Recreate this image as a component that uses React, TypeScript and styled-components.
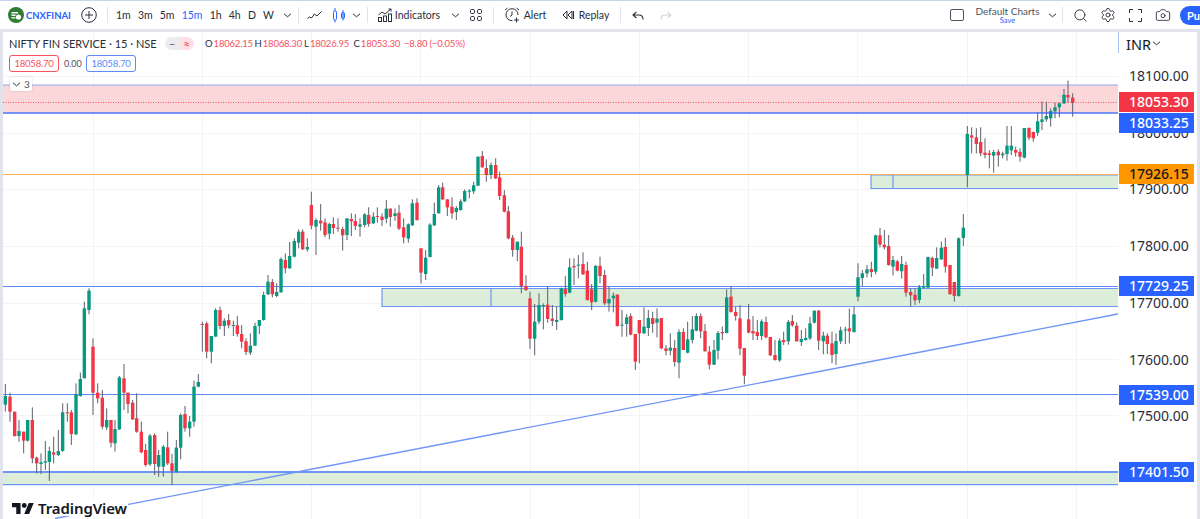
import React from 'react';
import styled, { createGlobalStyle } from 'styled-components';
import { Search, Settings, Camera } from 'lucide-react';

const COLORS = {
  text: '#2a2e39',
  blue: '#2962ff',
  softBlue: '#7ea0f8',
  red: '#f23645',
  legendRed: '#f7525f',
  green: '#089981',
  orange: '#ff9800',
  frame: '#e0e3eb',
};

const FONT = `'Lato', 'Liberation Sans', sans-serif`;
const PRICE_FONT = `'Noto Sans', 'Liberation Sans', sans-serif`;

const GlobalStyle = createGlobalStyle`
  html, body {
    margin: 0;
    padding: 0;
    background: ${COLORS.frame};
    font-family: ${FONT};
    overflow: hidden;
  }
`;

const Page = styled.div`
  width: 1200px;
  height: 519px;
  display: flex;
  flex-direction: column;
  overflow: hidden;
  background: ${COLORS.frame};
`;

const TopBar = styled.header`
  height: 28px;
  flex: none;
  display: flex;
  align-items: center;
  padding-left: 8px;
  background: #fff;
  border-top: 1px solid #c6d4ee;
  color: ${COLORS.text};
  font-size: 10.5px;
`;

const Item = styled.div<{ $ml?: number; $w?: number }>`
  flex: none;
  display: flex;
  align-items: center;
  justify-content: center;
  margin-left: ${(p) => p.$ml ?? 0}px;
  width: ${(p) => (p.$w ? `${p.$w}px` : 'auto')};
  white-space: nowrap;
`;

const Ticker = styled(Item)`
  color: #2962ff;
  font-weight: 700;
  font-size: 9.5px;
  justify-content: flex-start;
`;

const Divider = styled.div<{ $ml: number }>`
  flex: none;
  width: 1px;
  height: 16px;
  margin-left: ${(p) => p.$ml}px;
  background: ${COLORS.frame};
`;

const IntervalRow = styled.div`
  flex: none;
  width: 158px;
  margin-left: 8px;
  display: flex;
  justify-content: space-between;
`;

const Interval = styled.span<{ $active?: boolean }>`
  color: ${(p) => (p.$active ? COLORS.blue : COLORS.text)};
`;

const RightTools = styled.div`
  margin-left: auto;
  display: flex;
  align-items: center;
`;

const LayoutName = styled.div`
  flex: none;
  width: 65px;
  margin-left: 11px;
  display: flex;
  flex-direction: column;
  align-items: center;
  line-height: 11px;
  font-size: 10px;
  color: #50535e;
  white-space: nowrap;
`;

const SaveHint = styled.span`
  color: ${COLORS.blue};
  font-size: 7.5px;
  line-height: 8px;
`;

const Publish = styled.div`
  flex: none;
  width: 20px;
  height: 19px;
  margin-left: 9px;
  padding-left: 7px;
  box-sizing: border-box;
  overflow: hidden;
  color: #fff;
  background: ${COLORS.blue};
  border-radius: 10px 0 0 10px;
  font-size: 11px;
  font-weight: 700;
  line-height: 19px;
`;

const ChartRow = styled.main`
  flex: 1;
  margin: 3px 3px 0 3px;
  display: flex;
  min-height: 0;
  background: #fff;
`;

const Plot = styled.section`
  position: relative;
  width: 1115px;
  flex: none;
  overflow: hidden;
`;

const PlotCanvas = styled.svg`
  display: block;
`;

const Legend = styled.div`
  position: absolute;
  left: 6px;
  top: 4px;
  display: flex;
  flex-direction: column;
  color: ${COLORS.text};
`;

const LegendRow = styled.div`
  display: flex;
  align-items: center;
  height: 15px;
`;

const Title = styled.span`
  width: 156px;
  font-size: 11px;
  white-space: nowrap;
`;

const Pill = styled.div`
  width: 29px;
  height: 13px;
  display: flex;
  border-radius: 7px;
  overflow: hidden;
  margin-right: 11px;
`;

const PillPart = styled.span<{ $tint: string; $ink: string }>`
  flex: 1;
  display: flex;
  align-items: center;
  justify-content: center;
  background: ${(p) => p.$tint};
  color: ${(p) => p.$ink};
  font-size: 11px;
  font-weight: 700;
  line-height: 1;
`;

const Ohlc = styled.span<{ $w?: number }>`
  width: ${(p) => (p.$w ? `${p.$w}px` : 'auto')};
  font-size: 9.5px;
  white-space: nowrap;
`;

const Value = styled.span`
  color: ${COLORS.legendRed};
  margin-left: 1px;
  letter-spacing: -0.2px;
`;

const QuoteRow = styled.div`
  display: flex;
  align-items: center;
  margin-top: 4px;
`;

const QuoteBox = styled.span<{ $tone: string }>`
  width: 50px;
  height: 17px;
  box-sizing: border-box;
  border: 1px solid ${(p) => p.$tone};
  border-radius: 3px;
  color: ${(p) => p.$tone};
  font-size: 9.5px;
  line-height: 15px;
  text-align: center;
  letter-spacing: -0.2px;
`;

const Spread = styled.span`
  width: 27px;
  padding-left: 5px;
  box-sizing: border-box;
  font-size: 9px;
  color: #50535e;
`;

const Collapse = styled.div`
  position: absolute;
  left: 7px;
  top: 45px;
  width: 22px;
  height: 14px;
  display: flex;
  align-items: center;
  justify-content: center;
  gap: 3px;
  background: #fff;
  border-radius: 2px;
  box-shadow: 0 0 2px rgba(42, 46, 57, 0.25);
  font-size: 10px;
  color: #50535e;
`;

const Watermark = styled.div`
  position: absolute;
  left: 6px;
  top: 468px;
  display: flex;
  align-items: center;
  gap: 4px;
  height: 16px;
  padding: 0 1px 0 3px;
  background: #fff;
  color: #131722;
  font-family: ${PRICE_FONT};
  font-size: 15px;
  font-weight: 600;
  line-height: 16px;
  letter-spacing: -0.1px;
`;

const PriceAxis = styled.aside`
  position: relative;
  flex: 1;
  overflow: hidden;
  background: #fff;
  font-family: ${PRICE_FONT};
`;

const AxisAccent = styled.div`
  position: absolute;
  left: 0;
  top: 0;
  width: 1px;
  height: 21px;
  background: #a8c0f4;
`;

const Currency = styled.div`
  position: absolute;
  left: 8px;
  top: 1px;
  display: flex;
  align-items: center;
  gap: 1px;
  height: 21px;
  font-size: 14.5px;
  color: #131722;
`;

const Tick = styled.div<{ $y: number }>`
  position: absolute;
  left: 11px;
  top: ${(p) => p.$y - 42}px;
  height: 20px;
  line-height: 20px;
  font-size: 14px;
  color: #2a2e39;
`;

const PriceTag = styled.div<{ $y: number; $bg: string; $ink: string }>`
  position: absolute;
  left: 1px;
  top: ${(p) => p.$y - 32}px;
  width: 75px;
  height: 20px;
  padding-left: 10px;
  box-sizing: border-box;
  background: ${(p) => p.$bg};
  color: ${(p) => p.$ink};
  font-size: 14px;
  font-weight: 500;
  line-height: 20px;
`;

// [x, up, wickTop, bodyTop, bodyBottom, wickBottom] read off 3x crops, each block has its own origin
type Row = [number, number, number, number, number, number];

const BLOCKS: { ox: number; oy: number; rows: Row[] }[] = [
  {
    ox: 0,
    oy: 370,
    rows: [
      [16, 1, 42, 78, 104, 125], [30, 0, 68, 80, 125, 155], [44, 0, 125, 125, 198, 200], [57, 1, 150, 183, 198, 215],
      [71, 0, 185, 185, 212, 250], [83, 1, 150, 150, 212, 215], [97, 0, 112, 150, 265, 280], [110, 0, 260, 263, 280, 310],
      [123, 1, 250, 277, 282, 312], [136, 1, 213, 274, 278, 300], [148, 1, 230, 243, 276, 333], [161, 0, 200, 247, 254, 280],
      [175, 1, 180, 243, 255, 258], [188, 1, 100, 127, 243, 245], [202, 0, 100, 127, 130, 155], [214, 0, 120, 127, 192, 225],
      [228, 1, 40, 72, 193, 195], [241, 1, 8, 27, 78, 80], [293, 0, 40, 68, 85, 100], [307, 0, 60, 83, 170, 178],
      [320, 1, 115, 150, 172, 180], [333, 0, 150, 150, 218, 232], [345, 1, 150, 177, 220, 245], [358, 1, 18, 22, 178, 180],
      [372, 0, -18, 25, 68, 120], [384, 0, 68, 68, 102, 130], [398, 0, 90, 98, 148, 150], [410, 0, 70, 145, 185, 188],
      [424, 0, 155, 185, 247, 250], [437, 0, 222, 240, 285, 290], [450, 1, 192, 197, 283, 288], [464, 0, 190, 195, 282, 315],
      [476, 1, 240, 255, 290, 320], [490, 1, 225, 230, 290, 320], [503, 0, 185, 232, 280, 285], [516, 0, 252, 280, 303, 345],
      [529, 1, 210, 233, 306, 308], [542, 1, 130, 135, 233, 268], [555, 0, 108, 132, 175, 185], [569, 1, 138, 155, 175, 200],
      [582, 1, 32, 50, 155, 170], [595, 1, 12, 36, 50, 52],
    ],
  },
  {
    ox: 0,
    oy: 180,
    rows: [
      [253, 1, 365, 385, 595, 595], [267, 1, 325, 332, 390, 403], [279, 0, 475, 500, 638, 705],
      [607, 0, 425, 432, 434, 515], [620, 0, 425, 430, 515, 535], [634, 1, 468, 468, 515, 550], [647, 1, 385, 390, 470, 470],
      [660, 0, 380, 390, 438, 448], [673, 1, 415, 422, 438, 468], [686, 0, 402, 420, 436, 445], [700, 1, 422, 435, 437, 468],
      [712, 0, 408, 436, 462, 470], [725, 0, 435, 462, 485, 505], [738, 0, 475, 484, 516, 525], [751, 1, 460, 497, 518, 525],
      [765, 1, 428, 438, 497, 498], [778, 1, 420, 420, 438, 462], [791, 1, 335, 345, 420, 422], [804, 1, 285, 305, 343, 345],
      [817, 0, 297, 306, 343, 352], [830, 1, 310, 336, 348, 352], [843, 1, 232, 237, 337, 338], [856, 0, 220, 240, 265, 280],
      [869, 1, 186, 228, 265, 266], [883, 1, 175, 183, 230, 232], [896, 1, 148, 155, 188, 205],
    ],
  },
  {
    ox: 300,
    oy: 120,
    rows: [
      [8, 0, 328, 335, 388, 390], [22, 1, 355, 381, 388, 395], [34, 0, 215, 255, 317, 328], [48, 1, 295, 300, 320, 405],
      [62, 0, 252, 302, 310, 332], [75, 0, 295, 307, 345, 352], [88, 1, 308, 312, 341, 358], [100, 0, 292, 312, 324, 342],
      [114, 0, 295, 323, 325, 335], [128, 0, 320, 327, 346, 392], [141, 1, 295, 295, 345, 360], [154, 0, 280, 297, 304, 348],
      [166, 0, 282, 303, 318, 330], [180, 1, 295, 313, 320, 350], [194, 1, 280, 283, 315, 322], [206, 0, 262, 285, 312, 320],
      [220, 1, 277, 290, 310, 312], [232, 0, 262, 288, 290, 308], [246, 0, 280, 290, 300, 318], [259, 1, 240, 266, 296, 310],
      [271, 0, 265, 266, 291, 320], [285, 1, 265, 280, 288, 303], [297, 0, 255, 278, 326, 330], [311, 0, 295, 322, 352, 370],
      [325, 1, 310, 313, 356, 368], [337, 1, 238, 250, 316, 318], [351, 0, 235, 248, 300, 302], [363, 0, 385, 385, 458, 490],
      [377, 1, 390, 413, 462, 480], [390, 1, 310, 314, 411, 412], [403, 1, 248, 282, 316, 318], [416, 1, 195, 202, 280, 280],
      [428, 0, 188, 202, 238, 240], [442, 0, 238, 238, 262, 288], [456, 0, 232, 260, 280, 296], [469, 1, 258, 264, 276, 300],
      [482, 1, 238, 244, 270, 272], [494, 1, 208, 213, 244, 246], [508, 1, 208, 212, 214, 235], [521, 1, 185, 196, 214, 222],
      [534, 1, 110, 110, 197, 198], [547, 0, 93, 108, 142, 143], [559, 0, 118, 144, 165, 185], [573, 1, 127, 135, 165, 178],
      [587, 0, 115, 135, 175, 177], [599, 0, 155, 172, 228, 240], [613, 0, 210, 226, 275, 277], [625, 0, 258, 274, 355, 358],
      [638, 0, 345, 353, 390, 410], [652, 1, 365, 365, 390, 424], [664, 0, 335, 380, 498, 520], [678, 0, 466, 498, 510, 513],
      [690, 0, 515, 535, 656, 687], [704, 1, 552, 605, 656, 706], [717, 1, 520, 555, 605, 612], [730, 1, 550, 555, 557, 628],
      [743, 0, 500, 554, 597, 608], [757, 0, 555, 596, 603, 618], [770, 1, 560, 600, 606, 630], [784, 1, 503, 505, 600, 602],
      [796, 0, 468, 507, 522, 530], [809, 1, 415, 442, 518, 520], [822, 0, 415, 438, 442, 495], [835, 1, 405, 434, 437, 475],
      [849, 0, 397, 432, 463, 465], [862, 0, 425, 452, 540, 542], [875, 0, 492, 508, 547, 570], [887, 1, 435, 438, 545, 547],
    ],
  },
  {
    ox: 600,
    oy: 200,
    rows: [
      [0, 0, 170, 197, 228, 250], [14, 0, 210, 225, 310, 315], [27, 1, 260, 297, 310, 335], [40, 1, 278, 287, 295, 337],
      [52, 0, 283, 284, 378, 380], [66, 1, 330, 374, 376, 410], [80, 1, 342, 352, 372, 410], [92, 0, 340, 348, 404, 406],
      [106, 0, 402, 402, 485, 510], [118, 0, 360, 360, 400, 490], [132, 1, 322, 380, 400, 402], [145, 1, 330, 354, 384, 408],
      [158, 0, 335, 354, 372, 398], [171, 1, 325, 356, 368, 412], [184, 0, 354, 354, 445, 448], [198, 0, 435, 445, 453, 466],
      [211, 1, 400, 443, 452, 466], [224, 0, 420, 444, 486, 500], [237, 1, 388, 396, 488, 535], [250, 0, 385, 396, 450, 450],
      [263, 1, 365, 418, 458, 460], [277, 1, 348, 388, 420, 430], [289, 1, 340, 348, 392, 394], [302, 0, 340, 348, 394, 415],
      [315, 0, 372, 393, 454, 455], [328, 0, 438, 455, 494, 508], [342, 1, 420, 450, 494, 495], [354, 1, 393, 399, 452, 478],
      [367, 0, 380, 396, 400, 420], [380, 1, 268, 292, 399, 400], [393, 0, 258, 290, 336, 338], [407, 0, 320, 336, 348, 362],
      [420, 0, 315, 355, 446, 466], [433, 0, 444, 444, 527, 553], [446, 0, 312, 358, 398, 400], [459, 0, 348, 393, 400, 420],
      [472, 0, 360, 396, 408, 420], [485, 1, 358, 364, 408, 420], [498, 0, 350, 366, 412, 415], [511, 0, 411, 411, 466, 468],
      [525, 0, 420, 465, 480, 482], [539, 1, 415, 422, 481, 485], [551, 0, 395, 420, 426, 435], [565, 1, 360, 366, 424, 434],
      [577, 0, 345, 363, 376, 380], [590, 0, 367, 377, 424, 425], [604, 1, 390, 417, 426, 438], [617, 1, 385, 414, 420, 422],
      [630, 1, 350, 370, 415, 420], [643, 1, 332, 332, 368, 370], [656, 0, 330, 332, 422, 450], [670, 1, 395, 407, 424, 463],
      [682, 0, 400, 407, 432, 462], [696, 0, 395, 430, 465, 490], [708, 1, 400, 423, 462, 495], [722, 1, 380, 391, 424, 432],
      [736, 1, 380, 388, 391, 432], [748, 0, 326, 385, 394, 430], [762, 1, 320, 343, 396, 398], [774, 1, 190, 232, 290, 304],
      [787, 1, 210, 220, 234, 258], [801, 1, 195, 208, 220, 232], [814, 0, 185, 207, 216, 232], [827, 1, 104, 106, 215, 223],
      [840, 0, 84, 106, 134, 142], [853, 0, 90, 134, 142, 148], [866, 0, 105, 138, 195, 197], [879, 1, 168, 180, 200, 226],
      [892, 0, 180, 184, 212, 214], [905, 1, 168, 192, 214, 236], [918, 0, 185, 195, 278, 290], [932, 0, 265, 276, 286, 320],
      [945, 0, 265, 284, 301, 315], [958, 1, 255, 262, 300, 310], [971, 1, 222, 259, 263, 265], [984, 1, 170, 171, 263, 265],
      [997, 0, 170, 174, 203, 228], [1010, 1, 142, 174, 206, 206], [1024, 1, 125, 143, 178, 180], [1036, 0, 113, 141, 200, 218],
      [1050, 0, 195, 195, 282, 285], [1063, 0, 246, 246, 288, 305], [1076, 1, 112, 115, 288, 290], [1090, 1, 42, 83, 114, 138],
    ],
  },
  {
    ox: 950,
    oy: 70,
    rows: [
      [52, 1, 168, 192, 315, 352], [65, 0, 172, 196, 203, 250], [79, 0, 175, 202, 222, 250], [92, 0, 172, 216, 250, 258],
      [105, 0, 205, 248, 255, 265], [118, 0, 240, 250, 255, 295], [131, 1, 240, 246, 257, 308], [145, 0, 238, 245, 256, 290],
      [158, 1, 245, 251, 256, 265], [171, 1, 168, 227, 252, 272], [184, 1, 168, 227, 241, 255], [197, 0, 230, 240, 248, 260],
      [210, 0, 235, 246, 260, 275], [223, 1, 174, 174, 263, 265], [237, 0, 172, 174, 203, 210], [250, 0, 185, 186, 205, 215],
      [263, 1, 127, 154, 188, 198], [276, 1, 95, 148, 156, 180], [289, 1, 95, 138, 148, 155], [302, 1, 115, 123, 145, 170],
      [315, 1, 98, 112, 124, 145], [328, 1, 98, 100, 112, 142], [342, 1, 57, 74, 100, 102], [354, 0, 32, 75, 82, 98],
      [368, 0, 70, 83, 98, 140],
    ],
  },
];

const GRID_X = [93, 202, 311, 420, 530, 639, 748, 857, 967, 1076];
const GRID_Y = [76, 133, 189, 246, 303, 359, 415];
const FULL_LINES = [286.5, 394.5];

const Candles: React.FC = () => (
  <g>
    {BLOCKS.flatMap(({ ox, oy, rows }) =>
      rows.map(([x, up, wt, bt, bb, wb]) => {
        const cx = ox + x / 3;
        const fill = up ? COLORS.green : COLORS.red;
        return (
          <g key={`${ox}-${x}`}>
            <rect x={cx - 0.5} y={oy + wt / 3} width={1} height={(wb - wt) / 3} fill="#5d606b" />
            <rect x={cx - 1.7} y={oy + bt / 3} width={3.4} height={Math.max((bb - bt) / 3, 1)} fill={fill} />
          </g>
        );
      }),
    )}
  </g>
);

const Zone: React.FC<{ x: number; y1: number; y2: number; divider?: number }> = ({ x, y1, y2, divider }) => (
  <g>
    <rect x={x} y={y1} width={1118 - x} height={y2 - y1} fill="#dcedda" />
    <path
      d={`M1118 ${y1}H${x}V${y2}H1118${divider ? `M${divider} ${y1}V${y2}` : ''}`}
      fill="none"
      stroke="#6f95f7"
      strokeWidth={1.2}
    />
  </g>
);

const ChartDrawing: React.FC = () => (
  <PlotCanvas width={1115} height={487} viewBox="3 32 1115 487">
    {GRID_X.map((x) => (
      <line key={x} x1={x + 0.5} x2={x + 0.5} y1={32} y2={519} stroke="#f3f4f6" />
    ))}
    {GRID_Y.map((y) => (
      <line key={y} x1={3} x2={1118} y1={y + 0.5} y2={y + 0.5} stroke="#f3f4f6" />
    ))}

    <rect x={3} y={85} width={1115} height={28} fill="#fcd7da" />
    <line x1={3} x2={1118} y1={85} y2={85} stroke="#8fabf6" strokeWidth={1.2} />
    <line x1={3} x2={1118} y1={102.5} y2={102.5} stroke="#f7525f" strokeDasharray="1 1.5" />

    <Zone x={871} y1={175} y2={188.5} divider={893} />
    <line x1={3} x2={1118} y1={174.5} y2={174.5} stroke="#fbb04f" />
    <Zone x={382} y1={288.5} y2={306.5} divider={491} />
    {FULL_LINES.map((y) => (
      <line key={y} x1={3} x2={1118} y1={y} y2={y} stroke="#5f8bf8" />
    ))}
    <rect x={3} y={472} width={1115} height={13} fill="#dcedda" />
    <line x1={3} x2={1118} y1={472} y2={472} stroke="#6f95f7" strokeWidth={2} />
    <line x1={3} x2={1118} y1={484.7} y2={484.7} stroke="#6f95f7" strokeWidth={1.2} />
    <line x1={55} x2={1118} y1={518.5} y2={314} stroke="#6f95f7" strokeWidth={1.3} />

    <Candles />
    <line x1={3} x2={1118} y1={113} y2={113} stroke={COLORS.blue} strokeWidth={1.3} strokeOpacity={0.85} />
  </PlotCanvas>
);

const Chevron: React.FC = () => (
  <svg width="9" height="5" viewBox="0 0 9 5" fill="none" stroke="#2a2e39" strokeWidth="1">
    <path d="M1 .8l3.5 3 3.5-3" />
  </svg>
);

const BrandMark: React.FC = () => (
  <svg width="16" height="16" viewBox="0 0 16 16">
    <circle cx="8" cy="8" r="8" fill="#2e7d32" />
    <path d="M3.500 5h6.500v1.400H3.500zM3.500 7.600h4v1.400h-4zM3.500 10.200h4v1.400h-4z" fill="#fff" />
    <circle cx="10.500" cy="10" r="2.600" fill="#fff" />
  </svg>
);

const LineStyleIcon: React.FC = () => (
  <svg width="15" height="9" viewBox="0 0 15 9" fill="none" stroke="#2a2e39" strokeWidth="1">
    <path d="M.5 7.500l2-1.500 2 1 3-4 2.500 2 4.500-4.500" />
  </svg>
);

const CandleIcon: React.FC = () => (
  <svg width="16" height="16" viewBox="0 0 16 16" fill="none" stroke="#2962ff" strokeWidth="1">
    <path d="M4 1v3M4 13v2.500M12 3v2.500M12 11.500v2" />
    <rect x="2.500" y="4" width="3" height="9" rx="1.200" />
    <rect x="10.500" y="5.500" width="3" height="6" rx="1.200" fill="#7ea0f8" />
  </svg>
);

const IndicatorsIcon: React.FC = () => (
  <svg width="14" height="14" viewBox="0 0 14 14" fill="none" stroke="#2a2e39" strokeWidth="1">
    <path d="M.5 7l3.500-3 3 2 6-5" />
    <path d="M10.500 1h2.500v2.500" />
    <rect x=".5" y="9.500" width="3" height="4" />
    <rect x="5.500" y="8" width="3" height="5.500" />
    <rect x="10.500" y="6" width="3" height="7.500" />
  </svg>
);

const LayoutIcon: React.FC = () => (
  <svg width="12" height="12" viewBox="0 0 12 12" fill="none" stroke="#2a2e39" strokeWidth="1">
    <rect x=".5" y=".5" width="4" height="4" rx="1.200" />
    <rect x="7.500" y=".5" width="4" height="4" rx="1.200" />
    <rect x=".5" y="7.500" width="4" height="4" rx="1.200" />
    <rect x="7.500" y="7.500" width="4" height="4" rx="1.200" />
  </svg>
);

const AlertIcon: React.FC = () => (
  <svg width="16" height="16" viewBox="0 0 16 16" fill="none" stroke="#2a2e39" strokeWidth="1">
    <path d="M8.500 13.700A6 6 0 1 1 14 8" />
    <path d="M8 4.500V8l-2 1.500M1 3l2.500-2M15 3l-2.500-2M12.500 10.500v5M10 13h5" />
  </svg>
);

const ReplayIcon: React.FC = () => (
  <svg width="12" height="10" viewBox="0 0 12 10" fill="none" stroke="#2a2e39" strokeWidth="1">
    <path d="M5 1L1 5l4 4zM10 1L6 5l4 4zM11.500 1v8" />
  </svg>
);

const UndoIcon: React.FC<{ flip?: boolean; color: string }> = ({ flip, color }) => (
  <svg
    width="12"
    height="9"
    viewBox="0 0 12 9"
    fill="none"
    stroke={color}
    strokeWidth="1.100"
    transform={flip ? 'scale(-1 1)' : undefined}
  >
    <path d="M4.500 .8L1 4l3.500 3M1 4h6c2.500 0 4 1.500 4 4.500" />
  </svg>
);

const FullscreenIcon: React.FC = () => (
  <svg width="13" height="13" viewBox="0 0 13 13" fill="none" stroke="#2a2e39" strokeWidth="1">
    <path d="M.5 4V.5H4M9 .5h3.500V4M12.500 9v3.500H9M4 12.500H.5V9" />
  </svg>
);

const TvLogo: React.FC = () => (
  <svg width="22" height="11" viewBox="0 4 36 18" fill="#131722">
    <path d="M14 22H7V11H0V4h14v18zM28 22h-8l7.500-18h8L28 22z" />
    <circle cx="20" cy="8" r="4" />
  </svg>
);

const CheckBox = styled.div`
  flex: none;
  width: 14px;
  height: 12px;
  box-sizing: border-box;
  border: 1px solid #50535e;
  border-radius: 2px;
`;

const INTERVALS = ['1m', '3m', '5m', '15m', '1h', '4h', 'D', 'W'];

const OHLC = [
  { key: 'O', value: '18062.15' },
  { key: 'H', value: '18068.30' },
  { key: 'L', value: '18026.95' },
  { key: 'C', value: '18053.30' },
];

const TICKS = [
  { y: 76, label: '18100.00' },
  { y: 133, label: '18000.00' },
  { y: 189, label: '17900.00' },
  { y: 246, label: '17800.00' },
  { y: 303, label: '17700.00' },
  { y: 360, label: '17600.00' },
  { y: 416, label: '17500.00' },
];

const TAGS = [
  { y: 92, label: '18053.30', bg: COLORS.red, ink: '#fff' },
  { y: 113, label: '18033.25', bg: COLORS.blue, ink: '#fff' },
  { y: 164, label: '17926.15', bg: COLORS.orange, ink: '#131722' },
  { y: 276, label: '17729.25', bg: COLORS.blue, ink: '#fff' },
  { y: 385, label: '17539.00', bg: COLORS.blue, ink: '#fff' },
  { y: 462, label: '17401.50', bg: COLORS.blue, ink: '#fff' },
];

const App: React.FC = () => (
  <Page>
    <GlobalStyle />
    <TopBar>
      <BrandMark />
      <Ticker $ml={2} $w={44}>CNXFINAI</Ticker>
      <Item $ml={11}>
        <svg width="16" height="16" viewBox="0 0 16 16" fill="none" stroke="#2a2e39" strokeWidth="1">
          <circle cx="8" cy="8" r="7.300" />
          <path d="M8 4v8M4 8h8" />
        </svg>
      </Item>
      <Divider $ml={10} />
      <IntervalRow>
        {INTERVALS.map((label) => (
          <Interval key={label} $active={label === '15m'}>{label}</Interval>
        ))}
      </IntervalRow>
      <Item $ml={7} $w={12}><Chevron /></Item>
      <Divider $ml={5} />
      <Item $ml={8}><LineStyleIcon /></Item>
      <Item $ml={9}><CandleIcon /></Item>
      <Item $ml={3} $w={12}><Chevron /></Item>
      <Divider $ml={5} />
      <Item $ml={10}><IndicatorsIcon /></Item>
      <Item $ml={3} $w={45}>Indicators</Item>
      <Item $ml={9} $w={12}><Chevron /></Item>
      <Item $ml={9}><LayoutIcon /></Item>
      <Divider $ml={11} />
      <Item $ml={10}><AlertIcon /></Item>
      <Item $ml={4} $w={22}>Alert</Item>
      <Item $ml={16}><ReplayIcon /></Item>
      <Item $ml={5} $w={30}>Replay</Item>
      <Divider $ml={11} />
      <Item $ml={11}><UndoIcon color="#2a2e39" /></Item>
      <Item $ml={16}><UndoIcon flip color="#d1d4dc" /></Item>
      <RightTools>
        <CheckBox />
        <LayoutName>
          Default Charts
          <SaveHint>Save</SaveHint>
        </LayoutName>
        <Item $ml={6} $w={12}><Chevron /></Item>
        <Divider $ml={4} />
        <Item $ml={10}><Search size={15} strokeWidth={1.5} color="#2a2e39" /></Item>
        <Item $ml={12}><Settings size={16} strokeWidth={1.4} color="#2a2e39" /></Item>
        <Item $ml={13}><FullscreenIcon /></Item>
        <Item $ml={13}><Camera size={16} strokeWidth={1.3} color="#2a2e39" /></Item>
        <Publish>Pu</Publish>
      </RightTools>
    </TopBar>

    <ChartRow>
      <Plot>
        <ChartDrawing />
        <Legend>
          <LegendRow>
            <Title>NIFTY FIN SERVICE · 15 · NSE</Title>
            <Pill>
              <PillPart $tint="#ebecef" $ink="#787b86">–</PillPart>
              <PillPart $tint="#fde0e4" $ink="#f7525f">≈</PillPart>
            </Pill>
            {OHLC.map((o) => (
              <Ohlc key={o.key} $w={49.5}>{o.key}<Value>{o.value}</Value></Ohlc>
            ))}
            <Ohlc><Value>−8.80 (−0.05%)</Value></Ohlc>
          </LegendRow>
          <QuoteRow>
            <QuoteBox $tone={COLORS.legendRed}>18058.70</QuoteBox>
            <Spread>0.00</Spread>
            <QuoteBox $tone="#5b8cf8">18058.70</QuoteBox>
          </QuoteRow>
        </Legend>
        <Collapse>
          <Chevron />3
        </Collapse>
        <Watermark>
          <TvLogo />
          TradingView
        </Watermark>
      </Plot>
      <PriceAxis>
        <AxisAccent />
        <Currency>
          INR
          <Chevron />
        </Currency>
        {TICKS.map((t) => (
          <Tick key={t.label} $y={t.y}>{t.label}</Tick>
        ))}
        {TAGS.map((t) => (
          <PriceTag key={t.label} $y={t.y} $bg={t.bg} $ink={t.ink}>{t.label}</PriceTag>
        ))}
      </PriceAxis>
    </ChartRow>
  </Page>
);

export default App;
